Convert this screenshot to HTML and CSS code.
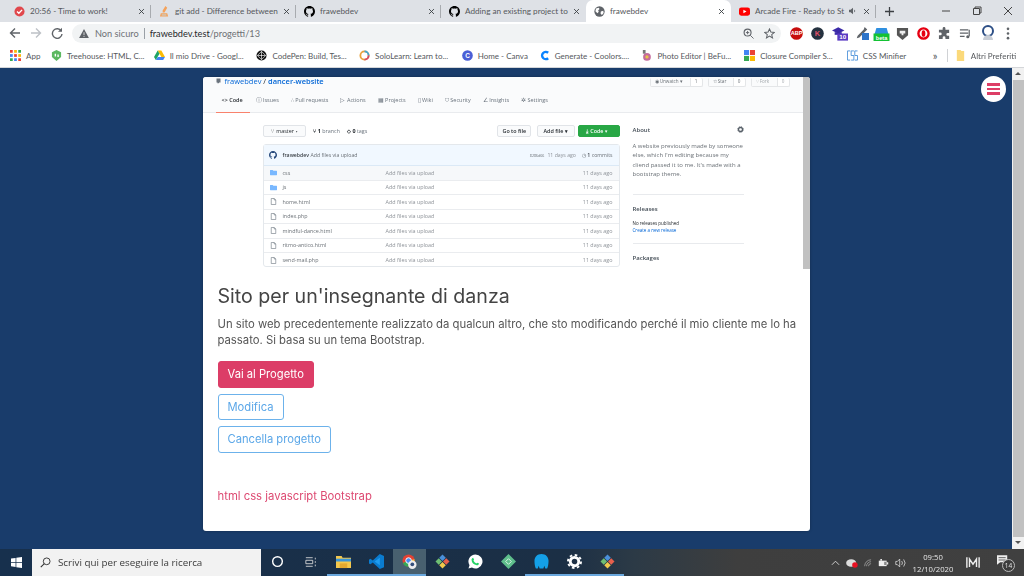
FILE: index.html
```html
<!DOCTYPE html>
<html lang="it">
<head>
<meta charset="utf-8">
<title>frawebdev</title>
<link rel="stylesheet" href="styles.css">
</head>
<body>
<svg class="defs" width="0" height="0" aria-hidden="true">
  <symbol id="gh" viewBox="0 0 16 16"><path d="M8 0C3.6 0 0 3.6 0 8c0 3.5 2.3 6.5 5.5 7.6.4.1.5-.2.5-.4v-1.4c-2.2.5-2.7-1-2.7-1-.4-.9-.9-1.2-.9-1.2-.7-.5.1-.5.1-.5.8.1 1.2.8 1.2.8.7 1.2 1.9.9 2.3.7.1-.5.3-.9.5-1.1-1.8-.2-3.6-.9-3.6-4 0-.9.3-1.6.8-2.1-.1-.2-.4-1 .1-2.1 0 0 .7-.2 2.2.8.6-.2 1.3-.3 2-.3s1.4.1 2 .3c1.5-1 2.2-.8 2.2-.8.4 1.1.2 1.9.1 2.1.5.6.8 1.3.8 2.1 0 3.1-1.9 3.7-3.7 3.9.3.3.6.8.6 1.5v2.2c0 .2.1.5.6.4C13.7 14.5 16 11.5 16 8c0-4.4-3.6-8-8-8z"/></symbol>
  <symbol id="folder" viewBox="0 0 16 14"><path fill="#79b8ff" d="M1 1h5l2 2h7a1 1 0 0 1 1 1v8a1 1 0 0 1-1 1H1a1 1 0 0 1-1-1V2a1 1 0 0 1 1-1z"/></symbol>
  <symbol id="file" viewBox="0 0 12 14"><path fill="none" stroke="#6a737d" stroke-width="1.2" d="M1.5 1h6l3 3v9h-9zM7.5 1v3h3"/></symbol>
  <symbol id="gear" viewBox="0 0 16 16"><circle cx="8" cy="8" r="4.6" fill="none" stroke="#586069" stroke-width="3"/><circle cx="8" cy="8" r="6.6" fill="none" stroke="#586069" stroke-width="2" stroke-dasharray="2.5 2.7"/></symbol>
  <symbol id="close" viewBox="0 0 10 10"><path d="M1.5 1.5l7 7M8.5 1.5l-7 7" stroke="#3c4043" stroke-width="1.3" fill="none"/></symbol>
  <symbol id="globe" viewBox="0 0 16 16"><circle cx="8" cy="8" r="7.5" fill="#5f6368"/><path fill="#fff" d="M3 3.500l4-1 1 2-2 2 1 2-2 2-3-3zM10 8l3.500-1 .5 3-2.500 3-2-2z"/></symbol>
  <symbol id="git" viewBox="0 0 16 16"><path fill="#4a90d9" d="M8 .5l3.500 3.500L8 7.500 4.500 4z"/><path fill="#e8604c" d="M12 4.500L15.500 8 12 11.500 8.500 8z"/><path fill="#f2c94c" d="M8 8.500l3.500 3.500L8 15.500 4.500 12z"/><path fill="#6fbf73" d="M4 4.500L7.500 8 4 11.500.5 8z"/></symbol>
</svg>
<div class="screen">
  <header class="chrome">
    <div class="tabbar">
      <div class="tab sep"><svg class="fav" viewBox="0 0 12 12"><circle cx="6" cy="6" r="5.500" fill="#e0474c"/><path d="M3.300 6l2 2 3.500-3.800" fill="none" stroke="#fff" stroke-width="1.500"/></svg><span class="tab-title">20:56 - Time to work!</span><svg class="x"><use href="#close"/></svg></div>
      <div class="tab sep"><svg class="fav" viewBox="0 0 12 12"><path fill="#f4a25b" d="M7 0l2 2-3 5H4V5zM2 8h7l1 3.500H1z"/><path fill="#cfc8bd" d="M3 9h5v1.500H3z"/></svg><span class="tab-title">git add - Difference between</span><svg class="x"><use href="#close"/></svg></div>
      <div class="tab sep"><svg class="fav"><use href="#gh"/></svg><span class="tab-title">frawebdev</span><svg class="x"><use href="#close"/></svg></div>
      <div class="tab"><svg class="fav"><use href="#gh"/></svg><span class="tab-title">Adding an existing project to</span><svg class="x"><use href="#close"/></svg></div>
      <div class="tab active"><svg class="fav"><use href="#globe"/></svg><span class="tab-title">frawebdev</span><svg class="x"><use href="#close"/></svg></div>
      <div class="tab sep yt"><svg class="fav" viewBox="0 0 12 12"><rect y="1.500" width="12" height="9" rx="2.500" fill="#f00"/><path fill="#fff" d="M4.800 4l3.400 2-3.400 2z"/></svg><span class="tab-title">Arcade Fire - Ready to St</span><svg class="spk" viewBox="0 0 10 10"><path fill="#5f6368" d="M0 3.500h2L5 1v8L2 6.500H0z"/><path d="M6.500 3.500a2 2 0 0 1 0 3" stroke="#5f6368" fill="none"/></svg><svg class="x"><use href="#close"/></svg></div>
      <svg class="plus" viewBox="0 0 10 10"><path d="M5 0v10M0 5h10" stroke="#3c4043" stroke-width="1.400"/></svg>
      <div class="winctl">
        <svg viewBox="0 0 10 10"><path d="M1 5h8" stroke="#444" fill="none"/></svg>
        <svg viewBox="0 0 10 10"><path d="M1.500 2.500h6v6h-6zM3 2.500V1h6v6H7.500" stroke="#444" fill="none"/></svg>
        <svg viewBox="0 0 10 10"><path d="M1 1l8 8M9 1l-8 8" stroke="#444" fill="none"/></svg>
      </div>
    </div>
    <div class="toolbar">
      <div class="nav">
        <svg viewBox="0 0 12 12"><path d="M11 6H2M6 1.500L1.500 6 6 10.500" fill="none" stroke="#5f6368" stroke-width="1.400"/></svg>
        <svg viewBox="0 0 12 12"><path d="M1 6h9M6 1.500L10.500 6 6 10.500" fill="none" stroke="#bdc1c6" stroke-width="1.400"/></svg>
        <svg viewBox="0 0 12 12"><path d="M10.300 4A4.800 4.800 0 1 0 11 7" fill="none" stroke="#5f6368" stroke-width="1.400"/><path fill="#5f6368" d="M11 .8v4H7z"/></svg>
      </div>
      <div class="omnibox">
        <svg class="warn" viewBox="0 0 12 11"><path fill="#5f6368" d="M6 0l6 11H0z"/><path stroke="#f1f3f4" d="M6 4v3.500M6 8.500v1.200"/></svg>
        <span class="insecure">Non sicuro</span><span class="bar"></span>
        <span class="url"><b>frawebdev.test</b>/progetti/13</span>
        <span class="grow"></span>
        <svg class="omni-ic" viewBox="0 0 12 12"><circle cx="5" cy="5" r="3.800" fill="none" stroke="#5f6368" stroke-width="1.200"/><path d="M8 8l3.500 3.500M3.200 5h3.600M5 3.200v3.600" stroke="#5f6368"/></svg>
        <svg class="omni-ic" viewBox="0 0 12 12"><path d="M6 1l1.500 3.400 3.700.4-2.800 2.400.9 3.600L6 8.900 2.700 10.800l.9-3.600L.8 4.800l3.700-.4z" fill="none" stroke="#5f6368" stroke-width="1.100"/></svg>
      </div>
      <div class="exts">
        <svg viewBox="0 0 14 14"><circle cx="7" cy="7" r="6.800" fill="#c70d0d"/><text x="7" y="9" class="ext-t">ABP</text></svg>
        <svg viewBox="0 0 14 14"><circle cx="7" cy="7" r="6.800" fill="#24313f"/><text x="7" y="9.500" class="ext-k">K</text></svg>
        <svg viewBox="0 0 18 16"><path fill="#3b2aa8" d="M7 1l7 3.500-7 3.500-7-3.500z"/><path fill="#3b2aa8" d="M3 6.500h8v3H3z"/><rect x="6" y="8" width="12" height="8" fill="#5b3cc4"/><text x="12" y="14.500" class="ext-n">10</text></svg>
        <svg viewBox="0 0 16 16"><path d="M11 1l3 3-2 2-7 7-3 1 1-3 7-7z" fill="#5f6368"/><rect x="8" y="8" width="8" height="8" fill="#2e74c9"/></svg>
        <svg viewBox="0 0 17 16"><path fill="#2f8fe0" d="M3 2h11l2 7H1z"/><rect y="8" width="17" height="8" fill="#14c234"/><text x="8.500" y="14.500" class="ext-b">beta</text></svg>
        <svg viewBox="0 0 14 14"><path fill="#555" d="M1 1h12v8l-6 5-6-5z"/><path fill="#eee" d="M4 4h6v3H8v2H6V7H4z"/></svg>
        <svg viewBox="0 0 14 14"><circle cx="7" cy="7" r="5.500" fill="#fff" stroke="#e60012" stroke-width="2.600"/><ellipse cx="7" cy="7" rx="2" ry="3.600" fill="#e60012"/></svg>
        <svg viewBox="0 0 14 14"><path fill="#5f6368" d="M5 1.500a1.500 1.500 0 0 1 3 0V3h4v3.500h-1.500a1.500 1.500 0 0 0 0 3H12V13H8v-1.500a1.500 1.500 0 0 0-3 0V13H1V9h1.500a1.500 1.500 0 0 0 0-3H1V3h4z"/></svg>
        <svg viewBox="0 0 14 14"><path d="M1 3h9M1 6.500h9M1 10h5" stroke="#5f6368" stroke-width="1.300"/><path d="M11 3v7" stroke="#5f6368" stroke-width="1.300"/><circle cx="9.500" cy="10.500" r="1.700" fill="#5f6368"/></svg>
        <svg viewBox="0 0 14 16"><circle cx="7" cy="6" r="5" fill="none" stroke="#2d4f86" stroke-width="2"/><path d="M2 15a5 5 0 0 1 10 0" fill="#c9ced6"/></svg>
        <svg class="dots" viewBox="0 0 4 14"><circle cx="2" cy="2" r="1.400" fill="#5f6368"/><circle cx="2" cy="7" r="1.400" fill="#5f6368"/><circle cx="2" cy="12" r="1.400" fill="#5f6368"/></svg>
      </div>
    </div>
    <div class="bookmarks">
      <span class="bm app-bm"><svg viewBox="0 0 12 12"><path fill="#ea4335" d="M0 0h3v3H0z"/><path fill="#fbbc05" d="M4.500 0h3v3h-3z"/><path fill="#34a853" d="M9 0h3v3H9z"/><path fill="#4285f4" d="M0 4.500h3v3H0z"/><path fill="#ea4335" d="M4.500 4.500h3v3h-3z"/><path fill="#fbbc05" d="M9 4.500h3v3H9z"/><path fill="#34a853" d="M0 9h3v3H0z"/><path fill="#4285f4" d="M4.500 9h3v3h-3z"/><path fill="#ea4335" d="M9 9h3v3H9z"/></svg>App</span>
      <span class="bm"><svg viewBox="0 0 12 12"><path fill="#5cb860" d="M6 0l5 2.500v5L6 12 1 7.500v-5z"/><path fill="#fff" d="M4 4h1.500v3H4zM7 5h1.500v2.500H7z"/></svg>Treehouse: HTML, C...</span>
      <span class="bm"><svg viewBox="0 0 12 12"><path fill="#fbbc05" d="M4 .5h4l4 7H8z"/><path fill="#1fa463" d="M4 .5L0 7.500l2 3.500 4-7z"/><path fill="#4285f4" d="M4 7.500h8l-2 3.500H2z"/></svg>Il mio Drive - Googl...</span>
      <span class="bm"><svg viewBox="0 0 12 12"><circle cx="6" cy="6" r="5.500" fill="#111"/><path d="M6 1.500L10.500 6 6 10.500 1.500 6zM6 1.500v9M1.500 6h9" stroke="#fff" stroke-width=".7" fill="none"/></svg>CodePen: Build, Tes...</span>
      <span class="bm"><svg viewBox="0 0 12 12"><circle cx="6" cy="6" r="4.500" fill="none" stroke="#e9a23b" stroke-width="2"/><path d="M6 1.500a4.500 4.500 0 0 1 4.500 4.500" fill="none" stroke="#3fa7d6" stroke-width="2"/><path d="M10.500 6A4.500 4.500 0 0 1 6 10.500" fill="none" stroke="#d6496b" stroke-width="2"/></svg>SoloLearn: Learn to...</span>
      <span class="bm home-bm"><svg viewBox="0 0 12 12"><circle cx="6" cy="6" r="5.800" fill="#4a5fd6"/><text x="6" y="8.500" class="ext-c">C</text></svg>Home - Canva</span>
      <span class="bm"><svg viewBox="0 0 12 12"><path d="M10 3a4 4 0 1 0 0 6" fill="none" stroke="#0a84ff" stroke-width="2.600"/></svg>Generate - Coolors....</span>
      <span class="bm"><svg viewBox="0 0 12 12"><circle cx="6.500" cy="7.500" r="4.200" fill="#c46a9b"/><circle cx="6.500" cy="7.500" r="1.800" fill="#e8c547"/><path d="M2 0h3v4H2z" fill="#777"/></svg>Photo Editor | BeFu...</span>
      <span class="bm"><svg viewBox="0 0 12 12"><path fill="#4285f4" d="M0 0h5.500v5.500H0z"/><path fill="#ea4335" d="M6.500 0H12v5.500H6.500z"/><path fill="#34a853" d="M0 6.500h5.500V12H0z"/><path fill="#fbbc05" d="M6.500 6.500H12V12H6.500z"/></svg>Closure Compiler S...</span>
      <span class="bm css-bm"><svg viewBox="0 0 12 12"><path d="M.5 1h3M.5 1v10h3M4.500 1h3M4.500 1v5h3v5h-3M8.500 1h3M8.500 1v5h3v5h-3" fill="none" stroke="#4a90d9"/></svg>CSS Minifier</span>
      <span class="more">»</span><span class="bm-sep"></span>
      <span class="bm last-bm"><svg viewBox="0 0 12 12"><path fill="#fbd97a" d="M2 0h4l1 1h3v11H2z"/></svg>Altri Preferiti</span>
    </div>
  </header>

  <main class="page">
    <article class="card">
      <div class="shot">
        <div class="shot-main">
          <div class="repo-head">
            <div class="repo-line">
              <svg class="rp" viewBox="0 0 10 10"><path d="M1 0v8h2v2l1.500-1L6 10V8h3V0z" fill="#6a737d"/></svg>
              <span class="repo-name"><a>frawebdev</a> / <a><b>dancer-website</b></a></span>
              <span class="grow"></span>
              <span class="pill w53"><i>◉ Unwatch ▾</i><em>1</em></span>
              <span class="pill w38"><i>☆ Star</i><em>0</em></span>
              <span class="pill w39 dim"><i>⑂ Fork</i><em>0</em></span>
            </div>
            <nav class="repo-nav">
              <span class="on"><b>&lt;&gt; Code</b></span>
              <span>ⓘ Issues</span><span>⑃ Pull requests</span><span>▷ Actions</span><span>▦ Projects</span><span>▯ Wiki</span><span>⛉ Security</span><span>∠ Insights</span><span>✲ Settings</span>
            </nav>
          </div>
          <div class="repo-body">
            <section class="files">
              <div class="file-tools">
                <span class="btn"><span class="tb">⑂ &nbsp;master ▾</span></span>
                <span class="tool-t"><b>⑂ 1</b> branch</span>
                <span class="tool-t"><b>◇ 0</b> tags</span>
                <span class="grow"></span>
                <span class="btn go">Go to file</span>
                <span class="btn add">Add file ▾</span>
                <span class="btn green">⤓ &nbsp;Code ▾</span>
              </div>
              <div class="table">
                <div class="commit">
                  <svg class="avatar"><use href="#gh"/></svg>
                  <b>frawebdev</b><span>&nbsp;Add files via upload</span>
                  <span class="grow"></span>
                  <small>8286d66</small><span class="ago">11 days ago</span><span class="commits">◷ <b>1</b> commits</span>
                </div>
                <div class="row hl"><svg class="fi"><use href="#folder"/></svg><span class="fname">css</span><span class="fmsg">Add files via upload</span><span class="ago">11 days ago</span></div>
                <div class="row"><svg class="fi"><use href="#folder"/></svg><span class="fname">js</span><span class="fmsg">Add files via upload</span><span class="ago">11 days ago</span></div>
                <div class="row"><svg class="fi"><use href="#file"/></svg><span class="fname">home.html</span><span class="fmsg">Add files via upload</span><span class="ago">11 days ago</span></div>
                <div class="row"><svg class="fi"><use href="#file"/></svg><span class="fname">index.php</span><span class="fmsg">Add files via upload</span><span class="ago">11 days ago</span></div>
                <div class="row"><svg class="fi"><use href="#file"/></svg><span class="fname">mindful-dance.html</span><span class="fmsg">Add files via upload</span><span class="ago">11 days ago</span></div>
                <div class="row"><svg class="fi"><use href="#file"/></svg><span class="fname">ritmo-antico.html</span><span class="fmsg">Add files via upload</span><span class="ago">11 days ago</span></div>
                <div class="row"><svg class="fi"><use href="#file"/></svg><span class="fname">send-mail.php</span><span class="fmsg">Add files via upload</span><span class="ago">11 days ago</span></div>
              </div>
            </section>
            <aside class="about">
              <div class="about-h"><b>About</b><svg class="about-g"><use href="#gear"/></svg></div>
              <p class="about-p">A website previously made by someone else, which I'm editing because my cliend passed it to me. It's made with a bootstrap theme.</p>
              <hr>
              <b class="rel">Releases</b>
              <p class="norel">No releases published<br><a>Create a new release</a></p>
              <hr class="hr2">
              <b class="pack">Packages</b>
            </aside>
          </div>
        </div>
        <div class="shot-scroll"></div>
      </div>
      <div class="card-body">
        <h1>Sito per un'insegnante di danza</h1>
        <p class="desc">Un sito web precedentemente realizzato da qualcun altro, che sto modificando perché il mio cliente me lo ha passato. Si basa su un tema Bootstrap.</p>
        <div class="actions">
          <a class="action primary">Vai al Progetto</a>
          <a class="action outline">Modifica</a>
          <a class="action outline">Cancella progetto</a>
        </div>
        <p class="tags">html css javascript Bootstrap</p>
      </div>
    </article>
    <button class="menu" aria-label="Menu"><span></span><span></span><span></span></button>
    <div class="page-scroll"><span class="up"></span><span class="thumb"></span><span class="down"></span></div>
  </main>

  <footer class="taskbar">
    <svg class="start" viewBox="0 0 12 12"><path fill="#fff" d="M0 1.700L5 1v4.500H0zM5.800.9L12 0v5.500H5.800zM0 6.300h5v4.600l-5-.7zM5.800 6.300H12V12l-6.200-.9z"/></svg>
    <div class="search"><svg viewBox="0 0 14 14"><circle cx="8.500" cy="5.500" r="4.300" fill="none" stroke="#333" stroke-width="1.200"/><path d="M5.500 8.500L1 13" stroke="#333" stroke-width="1.400"/></svg>Scrivi qui per eseguire la ricerca</div>
    <div class="apps">
      <span class="app"><svg viewBox="0 0 14 14"><circle cx="7" cy="7" r="4.500" fill="none" stroke="#fff" stroke-width="1.300"/></svg></span>
      <span class="app"><svg viewBox="0 0 14 14"><path d="M1 2h8M1 12h8M1 5h8v4H1zM12 2v2M12 6v2M12 10v2" fill="none" stroke="#ddd"/></svg></span>
      <span class="app open"><svg viewBox="0 0 16 14"><path fill="#f5c84c" d="M0 1h6l1 2h9v11H0z"/><path fill="#3a95d8" d="M0 4h16v3H0z"/><path fill="#e5a92f" d="M4 9h8v5H4z"/></svg></span>
      <span class="app open"><svg viewBox="0 0 16 16"><path fill="#0a7cd0" d="M11.500 0L16 2v12l-4.500 2L4 9l-2.500 2L0 10V6l1.500-1L4 7z"/><path fill="#1f9cf0" d="M11.500 4v8L6 8z"/></svg></span>
      <span class="app open cur"><svg viewBox="0 0 16 16"><circle cx="7" cy="7" r="6.500" fill="#e34133"/><path fill="#f5c33b" d="M7 7l6.300-1.500A6.500 6.500 0 0 1 8 13.400z"/><path fill="#36a853" d="M7 7l1 6.400A6.500 6.500 0 0 1 1 9.500z"/><circle cx="7" cy="7" r="3" fill="#4a8cf0" stroke="#fff"/><circle cx="11" cy="11.500" r="4.500" fill="#eee"/><circle cx="11" cy="11" r="2" fill="#35507c"/></svg></span>
      <span class="app"><svg><use href="#git"/></svg></span>
      <span class="app"><svg viewBox="0 0 16 16"><path fill="#fff" d="M8 .5a7.500 7.500 0 0 0-6.400 11.400L.5 15.500l3.700-1A7.500 7.500 0 1 0 8 .5z"/><path fill="#25d366" d="M5.500 4l1 2-.7 1c.6 1.300 1.700 2.400 3 3l1-.8 2 1c-.2 1.500-1.500 2-2.500 1.800C6 11.500 4 9.500 3.800 6.500 3.700 5 4.500 4.200 5.500 4z"/></svg></span>
      <span class="app"><svg viewBox="0 0 16 16"><path fill="#5fbf8c" d="M8 0l8 8-8 8-8-8z"/><path d="M5 8l3-3 3 3-3 3z" fill="none" stroke="#dff5e8"/></svg></span>
      <span class="app open"><svg viewBox="0 0 16 16"><path fill="#14a0e8" d="M8 0c4.500 0 7.500 3 7.500 7.500 0 3-.5 6-1.500 8h-2l-1-3-1 3H6l-1-3-1 3H2C1 13.500.5 10.500.5 7.500.5 3 3.500 0 8 0z"/></svg></span>
      <span class="app open"><svg viewBox="0 0 16 16"><circle cx="8" cy="8" r="4.500" fill="none" stroke="#fff" stroke-width="3"/><circle cx="8" cy="8" r="7" fill="none" stroke="#fff" stroke-width="2" stroke-dasharray="2.800 2.700"/></svg></span>
      <span class="app open"><svg><use href="#git"/></svg></span>
    </div>
    <div class="tray">
      <svg class="t1" viewBox="0 0 10 6"><path d="M1 5l4-4 4 4" fill="none" stroke="#ddd"/></svg>
      <svg class="t2" viewBox="0 0 14 12"><ellipse cx="6" cy="6" rx="6" ry="4.500" fill="#ddd"/><circle cx="10.500" cy="8.500" r="3.300" fill="#e81123"/></svg>
      <svg class="t3" viewBox="0 0 14 12"><path d="M1 11a10 10 0 0 1 10-10M4 11a7 7 0 0 1 7-7M7 11a4 4 0 0 1 4-4" fill="none" stroke="#bbb"/></svg>
      <svg class="t4" viewBox="0 0 14 10"><path fill="#eee" d="M1 2h10v7H1z"/><path fill="#777" d="M8 3.500h2v4H8z"/><path fill="#eee" d="M11.500 4H13v3h-1.500zM3 0h2v2H3z"/></svg>
      <svg class="t5" viewBox="0 0 14 12"><path d="M1 4h2l3-3v10L3 8H1zM8.500 3.500a4 4 0 0 1 0 5M11 1.500a7 7 0 0 1 0 9" fill="none" stroke="#ddd"/></svg>
      <div class="clock"><span>09:50</span><span>12/10/2020</span></div>
      <svg class="t6" viewBox="0 0 16 12"><path d="M1 0v12M15 0v12M4 11V2l4 6 4-6v9" stroke="#eee" stroke-width="1.600" fill="none"/></svg>
      <div class="notif"><svg viewBox="0 0 14 12"><path fill="#eee" d="M0 0h13v9H4L0 12z"/><path d="M2 3h9M2 6h9" stroke="#3d3d3d"/></svg><span>14</span></div>
    </div>
  </footer>
</div>
</body>
</html>
```
FILE: styles.css
```css
* { box-sizing: border-box; }
html, body { margin: 0; padding: 0; }
body { width: 1024px; height: 576px; overflow: hidden; font-family: "Open Sans", "Liberation Sans", sans-serif; }
.defs { position: absolute; }
.grow { flex: 1; }
.screen { width: 1024px; height: 576px; display: flex; flex-direction: column; filter: blur(.3px); }

/* browser chrome */
.chrome { height: 68px; flex: none; background: #fff; border-bottom: 1px solid #d4d6d9; font-family: Lato, sans-serif; }
.tabbar { height: 22px; background: #dee1e6; display: flex; align-items: center; padding-left: 6px; }
.tab { width: 145px; height: 22px; display: flex; align-items: center; padding: 0 6px 0 8px; font-size: 8.200px; color: #55585c; position: relative; white-space: nowrap; }
.tab.sep::after { content: ""; position: absolute; right: 0; top: 5px; height: 13px; width: 1px; background: #a8abaf; }
.tab.active { background: #fff; border-radius: 7px 7px 0 0; color: #55585c; }
.fav { width: 11px; height: 11px; flex: none; margin-right: 5px; }
.tab-title { flex: 1; min-width: 0; }
.x { width: 7px; height: 7px; flex: none; margin-left: 4px; }
.spk { width: 8px; height: 8px; flex: none; margin-left: 3px; margin-right: 2px; }
.yt .x { margin-right: 0; }
.plus { width: 9px; height: 9px; margin-left: 9px; }
.winctl { margin-left: auto; display: flex; gap: 21px; padding-right: 11px; }
.winctl svg { width: 10px; height: 10px; }

.toolbar { height: 22px; display: flex; align-items: center; background: #fff; }
.nav { width: 72px; display: flex; gap: 9px; padding-left: 9px; flex: none; }
.nav svg { width: 12px; height: 12px; }
.omnibox { width: 709px; height: 19px; margin-top: 1px; border-radius: 10px; background: #f1f3f4; display: flex; align-items: center; padding: 0 6px 0 7px; font-size: 9.200px; color: #6e7175; flex: none; }
.warn { width: 10px; height: 9px; margin-right: 6px; }
.bar { width: 1px; height: 11px; background: #9aa0a6; margin: 0 5px; }
.url b { font-weight: 400; color: #26282b; }
.omni-ic { width: 11px; height: 11px; margin-left: 10px; }
.exts { flex: 1; display: flex; align-items: center; padding-left: 9px; }
.exts svg { width: 13px; height: 13px; margin-right: 8px; flex: none; }
.exts svg:nth-child(3) { width: 16px; height: 15px; }
.exts svg:nth-child(4) { width: 14px; height: 14px; margin-left: -1px; margin-right: 4px; }
.exts svg:nth-child(5) { width: 17px; height: 15px; margin-right: 6px; }
.exts svg:nth-child(9) { margin-right: 9px; }
.exts svg:nth-child(10) { width: 14px; height: 16px; margin-right: 11px; }
.exts svg.dots { width: 4px; margin-right: 0; }
.ext-t, .ext-k, .ext-n, .ext-b, .ext-c { fill: #fff; text-anchor: middle; font-family: "Liberation Sans", sans-serif; font-weight: 700; }
.ext-t { font-size: 6px; } .ext-k { font-size: 8px; fill: #e0506a; } .ext-n { font-size: 7px; } .ext-b { font-size: 6px; } .ext-c { font-size: 7px; }

.bookmarks { height: 23px; display: flex; align-items: center; padding-left: 10px; font-size: 8px; color: #55585c; white-space: nowrap; }
.bm { display: inline-flex; align-items: center; width: 102.700px; flex: none; }
.app-bm { width: 41px; }
.home-bm { width: 77px; }
.css-bm { width: 84px; }
.last-bm { width: auto; }
.bm svg { width: 11px; height: 11px; margin-right: 5px; flex: none; }
.more { margin-left: 2px; font-size: 11px; width: 6px; }
.bm-sep { width: 1px; height: 13px; background: #d0d2d5; margin: 0 7px 0 8px; }

/* page */
.page { flex: 1; min-height: 0; background: #193c6b; display: flex; position: relative; padding-right: 12px; justify-content: center; align-items: flex-start; }
.card { width: 607px; height: 454px; margin-top: 9px; background: #fff; border-radius: 3px; box-shadow: 0 0 3px rgba(0,0,0,.3); display: flex; flex-direction: column; overflow: hidden; }
.menu { position: absolute; right: 18px; top: 8px; width: 25px; height: 26px; border: 0; padding: 0; border-radius: 50%; background: #fff; display: flex; flex-direction: column; gap: 2px; align-items: center; justify-content: center; }
.menu span { width: 13px; height: 2.500px; background: #dd3e66; }
.page-scroll { position: absolute; right: 0; top: 0; bottom: 0; width: 12px; background: #f1f1f1; display: flex; flex-direction: column; align-items: center; }
.up, .down { height: 12px; width: 12px; flex: none; position: relative; }
.up::after, .down::after { content: ""; position: absolute; left: 3px; border: 3px solid transparent; }
.up::after { top: 1px; border-bottom-color: #555; }
.down::after { top: 4px; border-top-color: #555; }
.thumb { flex: 1; width: 11px; background: #c1c1c1; }

/* embedded screenshot */
.shot { height: 192px; flex: none; display: flex; font-size: 5.400px; color: #6a7076; filter: blur(.35px); }
.shot-main { flex: 1; min-width: 0; }
.shot-scroll { width: 7px; background: #c1c1c1; }
.repo-head { height: 36px; background: #fafbfc; border-bottom: 1px solid #e9ebee; padding: 0 13px 0 13px; }
.repo-line { height: 10px; display: flex; align-items: center; }
.rp { width: 5px; height: 6px; margin-right: 4px; margin-top: -2px; }
.repo-name { font-size: 7.500px; color: #24292e; position: relative; top: -1px; }
.repo-name a { color: #0366d6; }
.repo-name a b { font-weight: 600; }
.pill { height: 9px; display: flex; border: 1px solid #e4e6e8; border-radius: 2px; font-size: 4.600px; margin-left: 5px; line-height: 7px; background: #fff; border-top: 0; }
.pill i { flex: 1; font-style: normal; padding-left: 4px; background: #fafbfc; }
.pill em { width: 12px; text-align: center; font-style: normal; border-left: 1px solid #e4e6e8; }
.w53 { width: 53px; } .w38 { width: 38px; } .w39 { width: 39px; }
.dim { color: #a3a8ad; }
.repo-nav { display: flex; height: 26px; align-items: center; margin-left: -13px; padding-left: 13px; font-size: 5.500px; color: #6a737d; }
.repo-nav span { margin-right: 12px; height: 26px; line-height: 27px; white-space: nowrap; }
.repo-nav .on { width: 34px; padding: 0 0 0 6px; margin-right: 6px; border-bottom: 1.500px solid #f9826c; color: #24292e; }
.repo-nav .on b { font-weight: 600; }
.repo-body { display: flex; padding: 12px 0 0 60px; }
.files { width: 357px; flex: none; }
.file-tools { height: 12px; display: flex; align-items: center; gap: 7px; }
.btn { height: 12px; line-height: 11px; padding: 0 7px; border: 1px solid #e1e4e8; border-radius: 2px; background: #fafbfc; color: #24292e; font-weight: 600; font-size: 5.400px; white-space: nowrap; }
.tb { font-weight: 400; }
.tool-t b { color: #24292e; }
.tool-t { white-space: nowrap; font-size: 5.400px; color: #6a737d; }
.go { margin-right: -1px; width: 34px; padding: 0 0 0 5px; }
.add { width: 38px; padding: 0 0 0 6px; margin-right: -4px; }
.green { width: 42px; padding: 0 0 0 7px; background: #28a745; border-color: #28a745; color: #fff; }
.table { margin-top: 7px; height: 123px; border: 1px solid #e4e8ec; border-radius: 3px; }
.commit { height: 21px; background: #f1f8ff; border-bottom: 1px solid #dbe9f6; display: flex; align-items: center; padding: 0 6px 0 5px; white-space: nowrap; font-size: 5.200px; }
.commit b { color: #3c4248; font-weight: 600; }
.avatar { width: 8px; height: 8px; margin-right: 6px; fill: #24477a; }
.commit small { font-size: 3.600px; margin-right: 3px; }
.commits { margin-left: 6px; }
.row { height: 14.500px; display: flex; align-items: center; padding: 0 6px 0 6px; border-bottom: 1px solid #eaecef; white-space: nowrap; }
.row:last-child { border-bottom: 0; }
.hl { background: #f6f8fa; }
.fi { width: 7px; height: 7px; margin-right: 6px; flex: none; }
.fname { width: 103px; flex: none; color: #6a7076; }
.fmsg { flex: 1; color: #8d9298; }
.ago { color: #8d9298; }
.about { width: 111px; margin-left: 13px; flex: none; font-size: 6px; line-height: 9.400px; }
.about-h { display: flex; justify-content: space-between; align-items: center; height: 12px; }
.about b, .about-h b { color: #444d56; font-weight: 600; }
.about-g { width: 7px; height: 7px; margin-top: -3px; }
.about-p { margin: 5px 0 0; }
.about hr { border: 0; border-top: 1px solid #e8eaed; margin: 14px 0 0; }
.rel { display: block; margin-top: 10px; }
.norel { margin: 6px 0 0; font-size: 4.500px; line-height: 7px; color: #24292e; }
.norel a { color: #0366d6; }
.about .hr2 { margin-top: 9px; }
.pack { display: block; margin-top: 10px; }

/* card body */
.card-body { padding: 0 8px 0 15px; color: #4a4a4a; flex: 1; }
h1 { margin: 15px 0 0; font: 400 19.600px/24px Inter, sans-serif; color: #444; }
.desc { margin: 8px 0 0; font: 400 11.300px/16px Inter, sans-serif; color: #555; }
.actions { margin-top: 13px; display: flex; flex-direction: column; align-items: flex-start; gap: 6px; }
.action { height: 26.500px; padding: 0 9px; border-radius: 3px; border: 1px solid #6cb2eb; color: #5ba7e8; font: 400 11.200px/25px Inter, sans-serif; }
.primary { background: #dc3d67; border-color: #dc3d67; color: #fff; }
.tags { margin: 35px 0 0; font: 400 11.300px/16px Inter, sans-serif; color: #dd4a72; }

/* taskbar */
.taskbar { height: 27px; flex: none; display: flex; align-items: center; background: linear-gradient(90deg, #17304d 0, #1b2f45 55%, #2c3a46 62%, #3e3e3e 72%, #404040 100%); color: #e6e6e6; }
.start { width: 11px; height: 11px; margin: 0 10px 0 11px; flex: none; }
.search { width: 229px; height: 27px; background: #f2f2f2; display: flex; align-items: center; font-size: 9.800px; color: #3a3a3a; padding-left: 8px; flex: none; }
.search svg { width: 11px; height: 11px; margin-right: 7px; }
.apps { display: flex; }
.app { width: 33px; height: 27px; display: flex; align-items: center; justify-content: center; border-bottom: 2px solid transparent; }
.app svg { width: 15px; height: 15px; }
.app:nth-child(2) svg { width: 12px; height: 12px; }
.app.open { border-bottom-color: #6aa8de; }
.app.cur { background: #48606f; }
.tray { flex: 1; display: flex; align-items: center; justify-content: flex-end; }
.tray svg { flex: none; }
.t1 { width: 9px; height: 6px; margin-right: 6px; }
.t2 { width: 12px; height: 10px; margin-right: 6px; }
.t3 { width: 9px; height: 8px; margin-right: 5px; }
.t4 { width: 11px; height: 8px; margin-right: 6px; }
.t5 { width: 11px; height: 10px; }
.clock { width: 54px; display: flex; flex-direction: column; align-items: center; font-size: 7.700px; line-height: 12px; }
.t6 { width: 14px; height: 11px; margin-left: 6px; }
.notif { position: relative; width: 20px; margin-left: 17px; margin-right: 7px; height: 16px; }
.notif svg { width: 11px; height: 10px; position: absolute; left: 0; top: 0; }
.notif span { position: absolute; left: 5px; top: 4px; width: 13px; height: 13px; border: 1px solid #bbb; border-radius: 50%; background: #3d3d3d; font-size: 6.500px; line-height: 11px; text-align: center; }
```
